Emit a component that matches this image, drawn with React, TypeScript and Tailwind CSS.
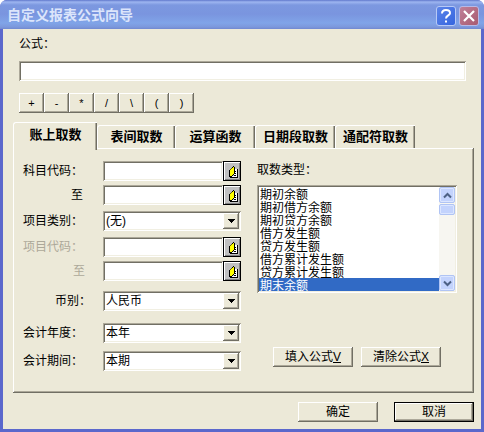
import { useState } from "react";
import type { ReactNode } from "react";
import clsx from "clsx";

const raised =
  "bg-[#ece9d8] shadow-[inset_-1px_-1px_0_#716f64,inset_1px_1px_0_#ffffff,inset_-2px_-2px_0_#aca899]";
const sunken =
  "bg-white shadow-[inset_1px_1px_0_#aca899,inset_-1px_-1px_0_#ffffff,inset_2px_2px_0_#716f64,inset_-2px_-2px_0_#f1efe2]";

const operators = ["+", "-", "*", "/", "\\", "(", ")"];

const tabs = [
  { name: "账上取数", width: "w-[84px]" },
  { name: "表间取数", width: "w-[78px]" },
  { name: "运算函数", width: "w-[80px]" },
  { name: "日期段取数", width: "w-[80px]" },
  { name: "通配符取数", width: "w-[80px]" },
];

const valueTypes = [
  "期初余额",
  "期初借方余额",
  "期初贷方余额",
  "借方发生额",
  "贷方发生额",
  "借方累计发生额",
  "贷方累计发生额",
  "期末余额",
];

function Row({
  id,
  label,
  className,
  labelClass = "pr-5",
  children,
}: {
  id: string;
  label: string;
  className?: string;
  labelClass?: string;
  children: ReactNode;
}) {
  return (
    <div className={clsx("flex items-center", className)}>
      <label htmlFor={id} className={clsx("w-20 shrink-0 text-right whitespace-nowrap", labelClass)}>
        {label}
      </label>
      {children}
    </div>
  );
}

function LookupField({ id, disabled }: { id: string; disabled?: boolean }) {
  return (
    <div className="flex h-5 flex-1">
      <input id={id} type="text" disabled={disabled} className={clsx("w-0 flex-1 px-1 outline-none", sunken)} />
      <button
        type="button"
        aria-label="查找"
        disabled={disabled}
        className="flex w-[18px] items-center justify-center border border-black bg-[#c0c0c0] pt-[2px] pl-[2px] shadow-[inset_1px_1px_0_#ffffff,inset_-1px_-1px_0_#808080]"
      >
        <svg width="9" height="12" viewBox="0 0 9 12" shapeRendering="crispEdges">
          <path d="M5 3h3v8H2v-1h3z" fill="#fff" />
          <path d="M0 4h1V3h1V2h1V1h1V0h1v8H4v1H3v1H0z" fill="#ff0" />
          <path
            d="M4 0h1v1H4zM3 1h1v1H3zM0 4h1v7H0zM5 1h1v3H5zM5 4h1v4H5zM4 8h1v1H4zM3 9h1v1H3zM1 10h2v1H1zM8 3h1v9H8zM1 11h7v1H1zM6 5h1v1H6zM6 7h1v1H6zM5 9h2v1H5z"
            fill="#000"
          />
          <path d="M2 2h1v1H2zM1 3h1v1H1z" fill="#606000" />
        </svg>
      </button>
    </div>
  );
}

function Combo({ id, value }: { id: string; value: string }) {
  return (
    <div className={clsx("relative flex h-5 flex-1", sunken)}>
      <select id={id} defaultValue={value} className="w-full appearance-none bg-transparent pr-5 pl-[3px] outline-none">
        <option>{value}</option>
      </select>
      <span
        className={clsx(
          "pointer-events-none absolute top-[2px] right-[2px] bottom-[2px] flex w-4 items-center justify-center",
          raised
        )}
      >
        <svg width="7" height="4" viewBox="0 0 7 4" shapeRendering="crispEdges">
          <path d="M0 0h7v1H0zM1 1h5v1H1zM2 2h3v1H2zM3 3h1v1H3z" fill="#000" />
        </svg>
      </span>
    </div>
  );
}

function ScrollButton({ label, d }: { label: string; d: string }) {
  return (
    <button
      type="button"
      aria-label={label}
      className="flex h-4 w-full shrink-0 items-center justify-center rounded-[2px] border border-[#b0c4f4] bg-[#c3d3fd] shadow-[inset_0_0_0_1px_#dce6ff]"
    >
      <svg width="9" height="7" viewBox="0 0 9 7">
        <path d={d} fill="none" stroke="#4d6185" strokeWidth="2" />
      </svg>
    </button>
  );
}

export default function App() {
  const [formula, setFormula] = useState("");
  const [activeTab, setActiveTab] = useState("账上取数");
  const [valueType, setValueType] = useState("期末余额");

  return (
    <div className="flex min-h-screen flex-col overflow-hidden rounded-t-[7px] bg-[#5b68cc] font-['Liberation_Sans','Noto_Sans_CJK_SC',sans-serif] text-[12px] leading-[14px] text-black">
      {/* Title bar */}
      <header className="flex h-[29px] shrink-0 items-center bg-[linear-gradient(#6078cc_0px,#9db5f0_2px,#7c98e0_5px,#7a95df_14px,#80a4e8_23px,#7c98dc_27px,#7088d0_29px)] pr-[5px] pl-[7px]">
        <h1 className="flex-1 text-[14px] leading-[18px] font-bold text-[#dce5fb]">自定义报表公式向导</h1>
        <div className="flex gap-[3px] pt-[2px]">
          <button
            type="button"
            aria-label="帮助"
            className="flex size-5 items-center justify-center rounded-[3px] border border-[#b7c9f6] bg-[linear-gradient(135deg,#5c84e8,#3465df)]"
          >
            <svg width="12" height="14" viewBox="0 0 12 14" fill="none" stroke="#fff" strokeWidth="2">
              <path d="M2 4.5C2 2 3.5 1 6 1s4 1 4 3.200C10 6.500 6 6.500 6 9.500" />
              <path d="M6 11.500v2" />
            </svg>
          </button>
          <button
            type="button"
            aria-label="关闭"
            className="flex size-5 items-center justify-center rounded-[3px] border border-[#b7b9e6] bg-[linear-gradient(135deg,#c08098,#a85a70)]"
          >
            <svg width="12" height="12" viewBox="0 0 12 12" stroke="#fff" strokeWidth="2.200">
              <path d="M1 1l10 10M11 1L1 11" />
            </svg>
          </button>
        </div>
      </header>

      <main className="mx-[3px] mb-[3px] flex flex-1 flex-col bg-[#ece9d8] pt-2 pr-[7px] pb-1 pl-[10px]">
        <div className="flex flex-col pr-2 pl-[6px]">
          <label htmlFor="formula">公式：</label>
          <input
            id="formula"
            type="text"
            value={formula}
            onChange={(e) => setFormula(e.target.value)}
            className={clsx("mt-[10px] h-5 px-1 outline-none", sunken)}
          />
          <div className="mt-3 flex">
            {operators.map((op) => (
              <button
                key={op}
                type="button"
                onClick={() => setFormula(formula + op)}
                className={clsx("h-5 w-[25px] text-[11px]", raised)}
              >
                {op}
              </button>
            ))}
          </div>
        </div>

        {/* Tabs */}
        <div role="tablist" className="mt-[9px] flex h-[26px] items-end">
          {tabs.map((tab) => {
            const active = tab.name === activeTab;
            return (
              <button
                key={tab.name}
                type="button"
                role="tab"
                aria-selected={active}
                onClick={() => setActiveTab(tab.name)}
                className={clsx(
                  "shrink-0 rounded-tl-[3px] border-t border-l border-white bg-[#ece9d8] text-[13px] font-bold whitespace-nowrap shadow-[inset_-1px_0_0_#716f64,inset_-2px_0_0_#aca899]",
                  tab.width,
                  active ? "z-10 mb-[-2px] h-7 pb-1" : "h-[23px]"
                )}
              >
                {tab.name}
              </button>
            );
          })}
        </div>

        <section
          role="tabpanel"
          className="flex items-start justify-between pt-[13px] pr-[17px] pb-[22px] pl-[10px] shadow-[inset_-1px_-1px_0_#716f64,inset_1px_1px_0_#ffffff,inset_-2px_-2px_0_#aca899]"
        >
          <div className="w-[218px]">
            <Row id="subject-from" label="科目代码：">
              <LookupField id="subject-from" />
            </Row>
            <Row id="subject-to" label="至" className="mt-1">
              <LookupField id="subject-to" />
            </Row>
            <Row id="item-type" label="项目类别：" className="mt-[6px]">
              <Combo id="item-type" value="(无)" />
            </Row>
            <Row id="item-from" label="项目代码：" className="mt-[6px]" labelClass="pr-5 text-[#aca899]">
              <LookupField id="item-from" disabled />
            </Row>
            <Row id="item-to" label="至" className="mt-1" labelClass="pr-[18px] text-[#aca899]">
              <LookupField id="item-to" disabled />
            </Row>
            <Row id="currency" label="币别：" className="mt-[10px]" labelClass="pr-3">
              <Combo id="currency" value="人民币" />
            </Row>
            <Row id="year" label="会计年度：" className="mt-3">
              <Combo id="year" value="本年" />
            </Row>
            <Row id="period" label="会计期间：" className="mt-2">
              <Combo id="period" value="本期" />
            </Row>
          </div>

          <div className="flex w-[200px] flex-col pt-[2px]">
            <label htmlFor="value-type">取数类型：</label>
            <div className={clsx("mt-2 flex h-[108px] p-[2px]", sunken)}>
              <select
                id="value-type"
                size={8}
                value={valueType}
                onChange={(e) => setValueType(e.target.value)}
                className="h-full min-w-0 flex-1 overflow-hidden bg-white p-0 outline-none"
              >
                {valueTypes.map((type) => (
                  <option
                    key={type}
                    className="flex h-[13px] min-h-0 items-center p-0 pl-px checked:bg-[linear-gradient(#316ac5,#316ac5)] checked:[-webkit-text-fill-color:#ffffff]"
                  >
                    {type}
                  </option>
                ))}
              </select>
              <div className="flex w-4 flex-col bg-[#f7f6f1]">
                <ScrollButton label="向上" d="M1 5.500l3.500-3.500L8 5.500" />
                <div className="mt-px h-[11px] rounded-[2px] border border-[#b0c4f4] bg-[#c3d3fd] shadow-[inset_0_0_0_1px_#dce6ff]" />
                <div className="flex-1" />
                <ScrollButton label="向下" d="M1 1.500l3.500 3.500L8 1.500" />
              </div>
            </div>
            <div className="mt-[54px] flex gap-2 pl-4">
              <button type="button" className={clsx("h-5 w-20 shrink-0 whitespace-nowrap", raised)}>
                填入公式<u>V</u>
              </button>
              <button
                type="button"
                onClick={() => setFormula("")}
                className={clsx("h-5 w-20 shrink-0 whitespace-nowrap", raised)}
              >
                清除公式<u>X</u>
              </button>
            </div>
          </div>
        </section>

        <footer className="mt-[9px] flex justify-end gap-4">
          <button type="button" className={clsx("h-5 w-20", raised)}>
            确定
          </button>
          <button type="button" className={clsx("h-5 w-20 border border-black", raised)}>
            取消
          </button>
        </footer>
      </main>
    </div>
  );
}
